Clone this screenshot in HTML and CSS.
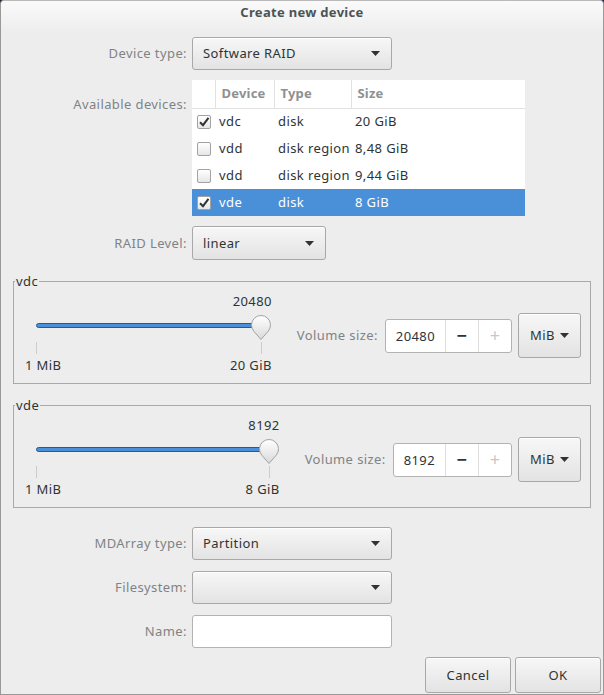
FILE: index.html
```html
<!DOCTYPE html>
<html>
<head>
<meta charset="utf-8">
<title>Create new device</title>
<link rel="stylesheet" href="styles.css">
</head>
<body>
<div class="window">
  <header class="titlebar">Create new device</header>
  <main class="content">
    <div class="row">
      <span class="lbl">Device type:</span>
      <div class="combo w200"><span>Software RAID</span><svg class="arrow" viewBox="0 0 9 5"><polygon points="0,0 9,0 4.5,5"/></svg></div>
    </div>

    <div class="row row-table">
      <span class="lbl lbl-top">Available devices:</span>
      <table class="devices">
        <colgroup><col class="c-check"><col class="c-dev"><col class="c-type"><col class="c-size"></colgroup>
        <thead>
          <tr><th></th><th>Device</th><th>Type</th><th>Size</th></tr>
        </thead>
        <tbody>
          <tr><td class="cb"><span class="check on"><svg viewBox="0 0 14 14"><path d="M3 7.2 L6 10.2 L11.5 2.8"/></svg></span></td><td>vdc</td><td>disk</td><td>20 GiB</td></tr>
          <tr><td class="cb"><span class="check"></span></td><td>vdd</td><td>disk region</td><td>8,48 GiB</td></tr>
          <tr><td class="cb"><span class="check"></span></td><td>vdd</td><td>disk region</td><td>9,44 GiB</td></tr>
          <tr class="selected"><td class="cb"><span class="check on"><svg viewBox="0 0 14 14"><path d="M3 7.2 L6 10.2 L11.5 2.8"/></svg></span></td><td>vde</td><td>disk</td><td>8 GiB</td></tr>
        </tbody>
      </table>
    </div>

    <div class="row row-raid">
      <span class="lbl">RAID Level:</span>
      <div class="combo w134 h34"><span>linear</span><svg class="arrow" viewBox="0 0 9 5"><polygon points="0,0 9,0 4.5,5"/></svg></div>
    </div>

    <fieldset class="frame">
      <legend>vdc</legend>
      <div class="frame-body">
        <div class="scale">
          <div class="scale-value">20480</div>
          <div class="scale-track">
            <div class="trough"></div>
            <svg class="knob" viewBox="0 0 22 26"><defs><linearGradient id="kg1" x1="0" y1="0" x2="0" y2="1"><stop offset="0" stop-color="#ffffff"/><stop offset="1" stop-color="#d9d9d9"/></linearGradient></defs><path d="M11 24.5 L3.82 16.22 A9.5 9.5 0 1 1 18.18 16.22 Z" fill="url(#kg1)" stroke="#a3a3a3" stroke-width="1"/></svg>
          </div>
          <div class="scale-ticks"><span class="tick"></span><span class="tick"></span></div>
          <div class="scale-marks"><span>1 MiB</span><span>20 GiB</span></div>
        </div>
        <div class="volume">
          <span class="vlbl">Volume size:</span>
          <div class="spin"><span class="spin-entry">20480</span><span class="spin-btn minus">−</span><span class="spin-btn plus">+</span></div>
          <div class="unit"><span>MiB</span><svg class="arrow" viewBox="0 0 9 5"><polygon points="0,0 9,0 4.5,5"/></svg></div>
        </div>
      </div>
    </fieldset>

    <fieldset class="frame frame2">
      <legend>vde</legend>
      <div class="frame-body">
        <div class="scale">
          <div class="scale-value">8192</div>
          <div class="scale-track">
            <div class="trough"></div>
            <svg class="knob" viewBox="0 0 22 26"><defs><linearGradient id="kg2" x1="0" y1="0" x2="0" y2="1"><stop offset="0" stop-color="#ffffff"/><stop offset="1" stop-color="#d9d9d9"/></linearGradient></defs><path d="M11 24.5 L3.82 16.22 A9.5 9.5 0 1 1 18.18 16.22 Z" fill="url(#kg2)" stroke="#a3a3a3" stroke-width="1"/></svg>
          </div>
          <div class="scale-ticks"><span class="tick"></span><span class="tick"></span></div>
          <div class="scale-marks"><span>1 MiB</span><span>8 GiB</span></div>
        </div>
        <div class="volume">
          <span class="vlbl">Volume size:</span>
          <div class="spin"><span class="spin-entry">8192</span><span class="spin-btn minus">−</span><span class="spin-btn plus">+</span></div>
          <div class="unit"><span>MiB</span><svg class="arrow" viewBox="0 0 9 5"><polygon points="0,0 9,0 4.5,5"/></svg></div>
        </div>
      </div>
    </fieldset>

    <div class="row row-md">
      <span class="lbl">MDArray type:</span>
      <div class="combo w200"><span>Partition</span><svg class="arrow" viewBox="0 0 9 5"><polygon points="0,0 9,0 4.5,5"/></svg></div>
    </div>
    <div class="row row-next">
      <span class="lbl">Filesystem:</span>
      <div class="combo w200"><span></span><svg class="arrow" viewBox="0 0 9 5"><polygon points="0,0 9,0 4.5,5"/></svg></div>
    </div>
    <div class="row row-next">
      <span class="lbl">Name:</span>
      <div class="entry w200"></div>
    </div>

    <div class="actions">
      <button class="btn">Cancel</button>
      <button class="btn">OK</button>
    </div>
  </main>
</div>
</body>
</html>
```
FILE: styles.css
```css
* { box-sizing: border-box; }

html { background: #1e2036; }

body {
  margin: 0;
  font-family: "Noto Sans", "DejaVu Sans", sans-serif;
  font-size: 13px;
  line-height: 17px;
  letter-spacing: 0.4px;
  color: #2e3436;
}

.window {
  width: 604px;
  height: 695px;
  border: 1px solid #999999;
  border-top-color: #b9b9b9;
  border-radius: 4px 4px 0 0;
  background: linear-gradient(#fafafa, #ededed 32px);
  display: flex;
  flex-direction: column;
  overflow: hidden;
}

.titlebar {
  height: 22px;
  line-height: 22px;
  text-align: center;
  font-weight: bold;
  letter-spacing: 0.3px;
  color: #4b5357;
}

.content {
  padding: 14px 12px 0;
  display: flex;
  flex-direction: column;
}

.row {
  display: flex;
  align-items: center;
}

.lbl {
  flex: none;
  width: 174px;
  margin-right: 5px;
  text-align: right;
  color: #808385;
}

.row-table { align-items: flex-start; margin-top: 10px; }
.lbl-top { margin-top: 16px; }
.row-raid { margin-top: 10px; }
.row-md { margin-top: 19px; }
.row-next { margin-top: 11px; }

.combo {
  height: 33px;
  border: 1px solid #a8a8a8;
  border-radius: 3px;
  background: linear-gradient(#f7f7f7, #e3e3e3);
  box-shadow: inset 0 1px #ffffff;
  display: flex;
  align-items: center;
  justify-content: space-between;
  padding: 0 11px 0 10px;
}

.w200 { width: 200px; }
.w134 { width: 134px; }
.h34 { height: 34px; }

.arrow {
  width: 9px;
  height: 5px;
  fill: #2e3436;
  flex: none;
}

/* device table */
.devices {
  width: 333px;
  border-collapse: collapse;
  table-layout: fixed;
  background: #ffffff;
}

.c-check { width: 23px; }
.c-dev { width: 59px; }
.c-type { width: 77px; }
.c-size { width: 174px; }

.devices th {
  height: 28px;
  padding: 0 0 0 6px;
  text-align: left;
  font-weight: bold;
  letter-spacing: 0.2px;
  color: #8e9192;
  border-bottom: 1px solid #e2e2e2;
}

.devices th + th { border-left: 1px solid #e2e2e2; }

.devices td {
  height: 27px;
  padding: 0 0 0 4px;
  white-space: nowrap;
}

.devices td.cb { padding: 0 0 0 5px; }

.devices tr.selected td {
  background: #4a90d9;
  color: #ffffff;
}

.check {
  display: block;
  width: 14px;
  height: 14px;
  border: 1px solid #a2a2a2;
  border-radius: 2px;
  background: linear-gradient(#ffffff, #e6e6e6);
}

.check svg {
  display: block;
  width: 14px;
  height: 14px;
  margin: -1px 0 0 -1px;
  fill: none;
  stroke: #2e3436;
  stroke-width: 2;
}

/* frames */
.frame {
  margin: 13px 0 0;
  padding: 0;
  border: 1px solid #a9a9a9;
  min-width: 0;
}

.frame legend {
  padding: 0 1px;
  margin-left: 1px;
  line-height: 17px;
  color: #2e3436;
}

.frame-body {
  display: flex;
  align-items: flex-start;
  padding: 2px 9px 9px 11px;
}

.scale {
  flex: 1;
  min-width: 0;
  margin-right: 25px;
  display: flex;
  flex-direction: column;
}

.scale-value {
  text-align: right;
  height: 18px;
  line-height: 18px;
}

.scale-track {
  position: relative;
  height: 26px;
  margin-top: 5px;
}

.trough {
  margin: 8px 11px 0;
  height: 5px;
  border: 1px solid #29598f;
  border-radius: 3px;
  background: #4a90d9;
}

.knob {
  position: absolute;
  top: 0;
  right: 0;
  width: 22px;
  height: 26px;
}

.scale-ticks {
  display: flex;
  justify-content: space-between;
  height: 12px;
  margin-top: 1px;
  padding: 0 10px 0 11px;
}

.tick {
  width: 1px;
  height: 12px;
  background: #cccccc;
}

.scale-marks {
  display: flex;
  justify-content: space-between;
  margin-top: 3px;
  line-height: 17px;
}

.volume {
  flex: none;
  display: flex;
  align-items: center;
  margin-top: 21px;
}

.vlbl { color: #808385; }

.spin {
  display: flex;
  height: 34px;
  margin-left: 7px;
  border: 1px solid #b3b3b3;
  border-radius: 3px;
  background: #ffffff;
}

.spin-entry {
  padding: 0 10px 0 10px;
  line-height: 32px;
}

.spin-btn {
  width: 33px;
  border-left: 1px solid #dedede;
  display: flex;
  align-items: center;
  justify-content: center;
  font-size: 18px;
}

.spin-btn.minus { color: #2e3436; font-weight: bold; }
.spin-btn.plus { color: #c8c8c8; }

.unit {
  margin-left: 6px;
  width: 63px;
  height: 45px;
  border: 1px solid #a8a8a8;
  border-radius: 3px;
  background: linear-gradient(#f7f7f7, #e3e3e3);
  box-shadow: inset 0 1px #ffffff;
  display: flex;
  align-items: center;
  justify-content: center;
  gap: 5px;
}

.entry {
  height: 33px;
  border: 1px solid #b3b3b3;
  border-radius: 3px;
  background: #ffffff;
}

.actions {
  display: flex;
  justify-content: flex-end;
  gap: 4px;
  margin: 9px -10px 0 0;
}

.btn {
  width: 86px;
  height: 36px;
  border: 1px solid #a8a8a8;
  border-radius: 3px;
  background: linear-gradient(#f7f7f7, #e3e3e3);
  box-shadow: inset 0 1px #ffffff;
  font: inherit;
  letter-spacing: inherit;
  color: #2e3436;
  padding: 0;
}
```
